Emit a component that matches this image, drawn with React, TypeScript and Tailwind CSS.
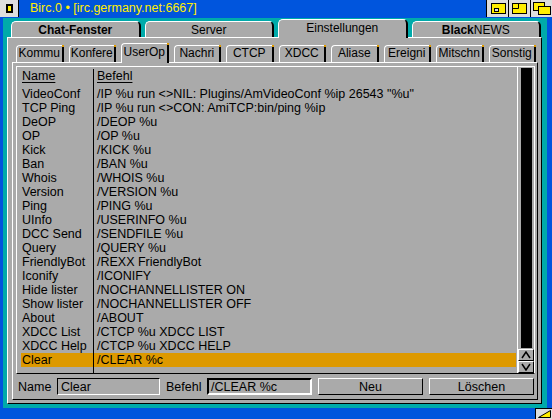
import React from "react";

const rows: [string, string][] = [
  ["VideoConf", '/IP %u run <>NIL: Plugins/AmVideoConf %ip 26543 "%u"'],
  ["TCP Ping", "/IP %u run <>CON: AmiTCP:bin/ping %ip"],
  ["DeOP", "/DEOP %u"],
  ["OP", "/OP %u"],
  ["Kick", "/KICK %u"],
  ["Ban", "/BAN %u"],
  ["Whois", "/WHOIS %u"],
  ["Version", "/VERSION %u"],
  ["Ping", "/PING %u"],
  ["UInfo", "/USERINFO %u"],
  ["DCC Send", "/SENDFILE %u"],
  ["Query", "/QUERY %u"],
  ["FriendlyBot", "/REXX FriendlyBot"],
  ["Iconify", "/ICONIFY"],
  ["Hide lister", "/NOCHANNELLISTER ON"],
  ["Show lister", "/NOCHANNELLISTER OFF"],
  ["About", "/ABOUT"],
  ["XDCC List", "/CTCP %u XDCC LIST"],
  ["XDCC Help", "/CTCP %u XDCC HELP"],
  ["Clear", "/CLEAR %c"],
];

const subTabs = ["Kommu", "Konfere", "UserOp", "Nachri", "CTCP", "XDCC", "Aliase", "Ereigni", "Mitschn", "Sonstig"];

function OuterTab({ children, active }: { children: React.ReactNode; active?: boolean }) {
  return (
    <div
      className={
        active
          ? "relative z-10 flex-1 h-[19px] -mb-px bg-[#aaaaaa] border-t border-l border-r-2 border-t-white border-l-white border-r-black rounded-t-[5px] text-center text-[12px] leading-[16px] whitespace-nowrap"
          : "flex-1 h-[16px] bg-[#aaaaaa] border-t border-l border-r-2 border-t-white border-l-white border-r-black rounded-t-[5px] text-center text-[12px] leading-[16px] whitespace-nowrap"
      }
    >
      {children}
    </div>
  );
}

function SubTab({ label, active }: { label: string; active?: boolean }) {
  return (
    <div
      className={
        active
          ? "relative z-10 flex-1 h-[20px] -mb-px pt-px bg-[#aaaaaa] border-t border-l border-r-2 border-t-white border-l-white border-r-black rounded-tl-[4px] rounded-tr-[2px]"
          : "relative flex-1 h-[17px] bg-[#aaaaaa] border-t border-l border-r-2 border-t-white border-l-white border-r-black rounded-tl-[4px] rounded-tr-[2px]"
      }
    >
      <div className="overflow-hidden whitespace-nowrap text-center text-[12px] leading-[14px]">{label}</div>
      <div className="absolute -top-px -right-[2px] w-[2px] h-[2px] bg-[#dd9900]" />
    </div>
  );
}

function Gadget({ children }: { children: React.ReactNode }) {
  return <div className="w-[22px] h-[17px] bg-[#dddddd] border-l border-l-black">{children}</div>;
}

export default function App() {
  return (
    <div className="w-[552px] h-[419px] bg-[#0055dd] flex flex-col overflow-hidden font-['Liberation_Sans',Arial,sans-serif] text-black">
      {/* Title bar */}
      <div className="h-[18px] flex shrink-0">
        <div className="w-[19px] h-[17px] bg-[#dddddd] border-r border-r-black">
          <div className="ml-[6px] mt-[4px] w-[7px] h-[9px] border-2 border-black bg-[#ffee00]" />
        </div>
        <div className="ml-[11px] text-[12.5px] leading-[16px] text-[#ffee00] whitespace-nowrap">
          Birc.0 • [irc.germany.net:6667]
        </div>
        <div className="flex-1" />
        <Gadget>
          <svg width="21" height="17">
            <rect x="4.5" y="3.5" width="14" height="10" fill="#ffee00" stroke="#000" />
            <rect x="7.5" y="8.5" width="4" height="3" fill="#dddddd" stroke="#000" />
          </svg>
        </Gadget>
        <Gadget>
          <svg width="21" height="17">
            <rect x="3.5" y="3.5" width="14" height="10" fill="#ffee00" stroke="#000" />
            <path d="M3.5 8.5 H9.5 V3.5" fill="none" stroke="#000" />
          </svg>
        </Gadget>
        <Gadget>
          <svg width="21" height="17">
            <rect x="2.5" y="2.5" width="11" height="8" fill="#ffee00" stroke="#000" />
            <rect x="7.5" y="6.5" width="12" height="8" fill="#ffee00" stroke="#000" />
          </svg>
        </Gadget>
      </div>

      {/* Middle */}
      <div className="flex-1 flex min-h-0">
        <div className="w-[3px]" />
        <div className="flex-1 bg-[#00aaaa] pl-[4px] pr-[5px] pt-px pb-[4px] flex flex-col">
          {/* outer tabs */}
          <div className="h-[18px] flex items-end gap-[4px] pl-[4px] pr-px shrink-0">
            <OuterTab>
              <span className="font-bold">Chat-Fenster</span>
            </OuterTab>
            <OuterTab>Server</OuterTab>
            <OuterTab active>Einstellungen</OuterTab>
            <OuterTab>
              <span className="font-bold">Black</span>NEWS
            </OuterTab>
          </div>
          {/* outer panel */}
          <div className="flex-1 min-h-0 bg-[#aaaaaa] border border-t-white border-l-white border-r-black border-b-black pt-[5px] pl-[4px] pr-[3px] pb-[3px] flex flex-col">
            <div className="h-[19px] flex items-end gap-[5px] pl-[4px] pr-[2px] shrink-0">
              {subTabs.map((t) => (
                <SubTab key={t} label={t} active={t === "UserOp"} />
              ))}
            </div>
            {/* inner panel */}
            <div className="flex-1 min-h-0 border border-t-white border-l-white border-r-black border-b-black pt-[3px] pl-[3px] pr-[2px] pb-[4px] flex flex-col">
              {/* list */}
              <div className="flex-1 min-h-0 flex border border-t-white border-l-white border-r-white border-b-black">
                <div className="flex-1 flex text-[12.5px] leading-[14px] pt-[2px]">
                  <div className="w-[77px] border-r border-r-black pl-[4px] whitespace-nowrap">
                    <div className="pl-px mb-[4px]">
                      <span className="underline underline-offset-[2px]">Name</span>
                    </div>
                    {rows.map(([n], i) => (
                      <div key={i} className={i === rows.length - 1 ? "pl-px h-[14px] bg-[#dd9900]" : "pl-px h-[14px]"}>
                        {n}
                      </div>
                    ))}
                  </div>
                  <div className="flex-1 pr-px whitespace-nowrap">
                    <div className="pl-[3px] mb-[4px]">
                      <span className="underline underline-offset-[2px]">Befehl</span>
                    </div>
                    {rows.map(([, c], i) => (
                      <div key={i} className={i === rows.length - 1 ? "pl-[3px] h-[14px] bg-[#dd9900]" : "pl-[3px] h-[14px]"}>
                        {c}
                      </div>
                    ))}
                  </div>
                </div>
                {/* scrollbar */}
                <div className="w-[17px] border-l border-l-white flex flex-col pt-px">
                  <div className="ml-[3px] w-[11px] h-[280px] bg-black" />
                  <div className="mt-px flex flex-col">
                    <div className="h-[12px] border border-t-white border-l-white border-r-black border-b-black flex items-center justify-center">
                      <svg width="10" height="8">
                        <path d="M1 7 L5 1 L9 7" fill="none" stroke="#000" strokeWidth="1.5" />
                      </svg>
                    </div>
                    <div className="h-[12px] border border-t-white border-l-white border-r-black border-b-black flex items-center justify-center">
                      <svg width="10" height="8">
                        <path d="M1 1 L5 7 L9 1" fill="none" stroke="#000" strokeWidth="1.5" />
                      </svg>
                    </div>
                  </div>
                </div>
              </div>
              {/* bottom row */}
              <div className="mt-[4px] h-[17px] flex items-stretch text-[12.5px] leading-[14px] shrink-0">
                <div className="w-[41px] pl-[2px] flex items-center">Name</div>
                <div className="w-[103px] border border-t-black border-l-black border-r-white border-b-white pl-[3px] flex items-center whitespace-nowrap">
                  Clear
                </div>
                <div className="w-[47px] pl-[6px] flex items-center">Befehl</div>
                <div className="w-[105px] border-2 border-t-black border-l-black border-r-white border-b-white pl-[2px] flex items-center whitespace-nowrap">
                  /CLEAR %c
                </div>
                <div className="ml-[6px] w-[105px] border border-t-white border-l-white border-r-black border-b-black flex items-center justify-center">
                  Neu
                </div>
                <div className="ml-[6px] w-[105px] border border-t-white border-l-white border-r-black border-b-black flex items-center justify-center">
                  Löschen
                </div>
              </div>
            </div>
          </div>
        </div>
        <div className="w-[5px]" />
      </div>

      {/* Bottom border */}
      <div className="h-[11px] flex justify-end shrink-0">
        <div className="w-[17px] h-[11px] bg-[#dddddd] border-l border-t border-l-black border-t-black">
          <svg width="16" height="10">
            <path d="M2.5 8.5 L14.5 1.5 L14.5 8.5 Z" fill="#ffee00" stroke="#000" />
          </svg>
        </div>
      </div>
    </div>
  );
}
